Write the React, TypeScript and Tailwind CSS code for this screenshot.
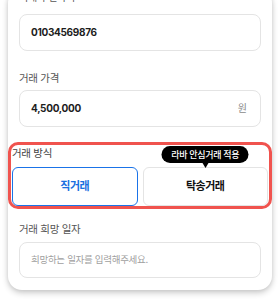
export default function App() {
  return (
    <div
      className="w-[280px] h-[302px] overflow-hidden bg-white"
      style={{ fontFamily: 'Inter, "Noto Sans CJK KR", sans-serif' }}
    >
      <div className="mx-2 mt-1 rounded-[14px] bg-white px-[11px] pb-[12px] shadow-[0_3px_6px_rgba(0,0,0,0.2),0_0_4px_rgba(0,0,0,0.08)]">
        {/* 연락처 (위쪽이 잘린 라벨) */}
        <div className="-mt-[15px] h-[16px] leading-[16px] text-[10px] text-[#555] tracking-[-0.3px]">
          거래자 연락처
        </div>
        <div className="mt-[9px] flex h-[37px] items-center rounded-lg border border-[#e4e4e4] px-[11px] text-[10px] font-bold text-[#1d1d1d] tracking-[-0.3px]">
          01034569876
        </div>

        <div className="mt-[20px] h-[16px] leading-[16px] text-[10.5px] text-[#555] tracking-[-0.3px]">
          거래 가격
        </div>
        <div className="mt-[3px] flex h-[37px] items-center justify-between rounded-lg border border-[#e4e4e4] pl-[11px] pr-[13px]">
          <span className="text-[10px] font-bold text-[#1d1d1d] tracking-[-0.3px]">4,500,000</span>
          <span className="text-[10px] text-[#8a8a8a]">원</span>
        </div>

        {/* 거래 방식 - 강조 영역 */}
        <div className="-mx-[11px] mt-[15px] rounded-[10px] border-[3px] border-[#f0534e] px-px pt-px">
          <div className="h-[16px] leading-[16px] text-[10.5px] text-[#444] tracking-[-0.3px]">
            거래 방식
          </div>
          <div className="mt-[5px] grid grid-cols-2 gap-[5px]">
            <button className="flex h-[39px] items-center justify-center rounded-[6px] border border-[#1a73e8] text-[11px] font-bold text-[#1a6fe0] tracking-[-0.5px]">
              직거래
            </button>
            <div className="relative">
              <button className="flex h-[39px] w-full items-center justify-center rounded-[6px] border border-[#e4e4e4] text-[11px] font-bold text-[#111] tracking-[-0.5px]">
                탁송거래
              </button>
              <div className="absolute left-1/2 top-[-21px] -translate-x-1/2">
                <div className="flex h-[17px] w-[87px] items-center justify-center rounded-full bg-black text-[9px] font-medium text-white tracking-[-0.3px]">
                  라바 안심거래 적용
                </div>
                <div className="mx-auto h-0 w-0 border-x-[3.5px] border-t-[5px] border-x-transparent border-t-black" />
              </div>
            </div>
          </div>
        </div>

        <div className="mt-[13px] h-[16px] leading-[16px] text-[10.5px] text-[#555] tracking-[-0.3px]">
          거래 희망 일자
        </div>
        <div className="mt-[4px] flex h-[36px] items-center rounded-lg border border-[#e4e4e4] px-[11px] text-[9.5px] text-[#a0a0a0] tracking-[-0.3px]">
          희망하는 일자를 입력해주세요.
        </div>
      </div>
    </div>
  );
}
